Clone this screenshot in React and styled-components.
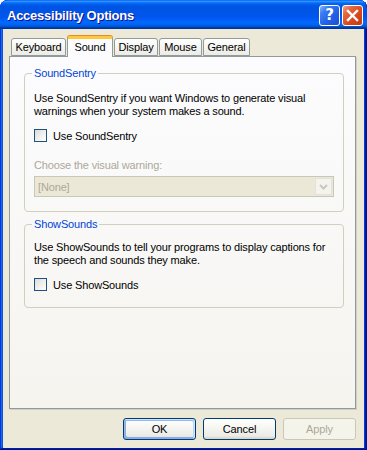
import React from 'react';
import styled, { createGlobalStyle } from 'styled-components';

const Global = createGlobalStyle`
  html, body { margin: 0; padding: 0; background: #ffffff; }
  body { font-family: "Liberation Sans", Arial, sans-serif; font-size: 11px; letter-spacing: -0.15px; color: #000; }
  #root { width: 367px; height: 450px; }
`;

const Window = styled.div`
  width: 367px;
  height: 450px;
  box-sizing: border-box;
  display: flex;
  flex-direction: column;
  background: #0831d9;
  border-radius: 8px 8px 0 0;
  padding-bottom: 3px;
  box-shadow: inset -1px -1px #00138c, inset 1px 1px #0831d9, inset -2px -2px #001ea0,
    inset 2px 2px #166aee, inset -3px -3px #003bda, inset 3px 3px #0855dd;
  overflow: hidden;
`;

const TitleBar = styled.div`
  height: 29px;
  flex: none;
  display: flex;
  align-items: center;
  padding: 0 4px 0 7px;
  border-radius: 8px 8px 0 0;
  background: linear-gradient(
    180deg,
    #0058ee 0%,
    #3593ff 4%,
    #288eff 6%,
    #127dff 8%,
    #036ffc 10%,
    #0262ee 14%,
    #0057e5 20%,
    #0054e3 24%,
    #0055eb 56%,
    #005bf5 66%,
    #026afe 76%,
    #0062ef 86%,
    #0052d6 92%,
    #0040ab 94%,
    #003092 100%
  );
`;

const Title = styled.div`
  flex: 1;
  color: #fff;
  font-family: "Liberation Sans", Arial, sans-serif;
  font-weight: bold;
  font-size: 13px;
  letter-spacing: -0.25px;
  text-shadow: 1px 1px #0f1089;
  padding-top: 1px;
`;

const Controls = styled.div`
  display: flex;
  gap: 2px;
  padding-top: 1px;
`;

const CtlButton = styled.div`
  width: 21px;
  height: 21px;
  box-sizing: border-box;
  border: 1px solid #fff;
  border-radius: 3px;
  display: flex;
  align-items: center;
  justify-content: center;
  color: #fff;
  font-family: "DejaVu Sans", sans-serif;
  font-weight: bold;
  font-size: 15px;
  letter-spacing: 0;
  background: ${p =>
    p.$close
      ? 'linear-gradient(135deg, #f0a58a 0%, #e5683f 25%, #d9481c 60%, #c23a12 100%)'
      : 'linear-gradient(135deg, #8fb4f8 0%, #3d7cf0 25%, #2160e8 60%, #1a4fd0 100%)'};
`;

const Body = styled.div`
  flex: 1;
  margin: 0 3px;
  background: #ece9d8;
  display: flex;
  flex-direction: column;
  padding: 7px 8px 8px 6px;
`;

const TabStrip = styled.div`
  height: 20px;
  display: flex;
  align-items: flex-end;
  gap: 1px;
  padding-left: 2px;
  position: relative;
  z-index: 1;
`;

const Tab = styled.div`
  box-sizing: border-box;
  width: ${p => p.$w}px;
  height: ${p => (p.$active ? 21 : 18)}px;
  margin-bottom: ${p => (p.$active ? -1 : 0)}px;
  border: 1px solid #919b9c;
  border-bottom: ${p => (p.$active ? 'none' : '1px solid #919b9c')};
  border-top: ${p => (p.$active ? '3px solid #ffc83c' : '1px solid #919b9c')};
  border-radius: 3px 3px 0 0;
  display: flex;
  align-items: center;
  justify-content: center;
  padding-bottom: ${p => (p.$active ? 2 : 0)}px;
  background: ${p => (p.$active ? '#fcfcfe' : 'linear-gradient(180deg, #fff 0%, #f7f7f4 40%, #ecebe6 100%)')};
  box-shadow: ${p => (p.$active ? '0 -1px 0 #e68b2c' : 'none')};
  font-size: 11px;
  white-space: nowrap;
`;

const Panel = styled.div`
  box-sizing: border-box;
  height: 353px;
  border: 1px solid #919b9c;
  box-shadow: 1px 1px 0 #d0cec6;
  background: linear-gradient(180deg, #fcfcfe 0%, #f5f4ef 100%);
  padding: 10px 11px 0 14px;
  display: flex;
  flex-direction: column;
  gap: 6px;
`;

const Group = styled.fieldset`
  margin: 0;
  min-width: 0;
  border: 1px solid #d0d0bf;
  border-radius: 4px;
  padding: 0 9px ${p => p.$pb}px 9px;
`;

const Legend = styled.legend`
  color: #0046d5;
  font-size: 11px;
  line-height: 13px;
  padding: 0 2px;
  margin-left: -2px;
`;

const Description = styled.p`
  margin: ${p => p.$mt}px 0 0 0;
  font-size: 11px;
  line-height: 13px;
  white-space: nowrap;
`;

const CheckRow = styled.label`
  display: flex;
  align-items: center;
  gap: 6px;
  margin-top: 11px;
  height: 13px;
  font-size: 11px;
`;

const Box = styled.span`
  width: 13px;
  height: 13px;
  box-sizing: border-box;
  border: 1px solid #1c5180;
  background: linear-gradient(135deg, #dcdcd7 0%, #f2f2ef 60%, #ffffff 100%);
  flex: none;
`;

const MutedLabel = styled.div`
  color: #aca899;
  margin-top: 17px;
  line-height: 13px;
  font-size: 11px;
`;

const Combo = styled.div`
  margin-top: 4px;
  height: 21px;
  box-sizing: border-box;
  border: 1px solid #c9c7ba;
  background: #ebe8d7;
  display: flex;
  align-items: stretch;
`;

const ComboText = styled.div`
  flex: 1;
  color: #aca899;
  padding-left: 3px;
  display: flex;
  align-items: center;
  font-size: 11px;
`;

const ComboButton = styled.div`
  width: 17px;
  margin: 1px;
  box-sizing: border-box;
  border: 1px solid #e2e1da;
  background: #f4f3ee;
  display: flex;
  align-items: center;
  justify-content: center;
`;

const ButtonRow = styled.div`
  margin-top: 9px;
  display: flex;
  justify-content: flex-end;
  gap: 7px;
`;

const Button = styled.div`
  width: ${p => p.$w}px;
  height: 22px;
  box-sizing: border-box;
  border: 1px solid ${p => (p.$disabled ? '#c9c7ba' : '#003c74')};
  border-radius: 3px;
  display: flex;
  align-items: center;
  justify-content: center;
  font-size: 11px;
  color: ${p => (p.$disabled ? '#aca899' : '#000')};
  background: ${p =>
    p.$disabled ? '#f5f4ea' : 'linear-gradient(180deg, #ffffff 0%, #f4f4f0 50%, #ecebe6 85%, #d6d0c5 100%)'};
  box-shadow: ${p =>
    p.$default
      ? 'inset -1px 1px #cee7ff, inset 1px 2px #98b8ea, inset -2px 2px #bcd4f6, inset 1px -1px #89ade4, inset 2px -2px #89ade4'
      : 'none'};
`;

const Chevron = () => (
  <svg width="9" height="6" viewBox="0 0 9 6">
    <path d="M1 1 L4.5 4.5 L8 1" fill="none" stroke="#c9c7ba" strokeWidth="2" />
  </svg>
);

const CloseX = () => (
  <svg width="13" height="13" viewBox="0 0 13 13">
    <path d="M2 2 L11 11 M11 2 L2 11" stroke="#fff" strokeWidth="2.4" strokeLinecap="square" />
  </svg>
);

export default function App() {
  return (
    <>
      <Global />
      <Window>
        <TitleBar>
          <Title>Accessibility Options</Title>
          <Controls>
            <CtlButton>?</CtlButton>
            <CtlButton $close>
              <CloseX />
            </CtlButton>
          </Controls>
        </TitleBar>
        <Body>
          <TabStrip>
            <Tab $w={55}>Keyboard</Tab>
            <Tab $w={46} $active>Sound</Tab>
            <Tab $w={44}>Display</Tab>
            <Tab $w={43}>Mouse</Tab>
            <Tab $w={47}>General</Tab>
          </TabStrip>
          <Panel>
            <Group $pb={14}>
              <Legend>SoundSentry</Legend>
              <Description $mt={12}>
                Use SoundSentry if you want Windows to generate visual
                <br />
                warnings when your system makes a sound.
              </Description>
              <CheckRow>
                <Box />
                Use SoundSentry
              </CheckRow>
              <MutedLabel>Choose the visual warning:</MutedLabel>
              <Combo>
                <ComboText>[None]</ComboText>
                <ComboButton>
                  <Chevron />
                </ComboButton>
              </Combo>
            </Group>
            <Group $pb={16}>
              <Legend>ShowSounds</Legend>
              <Description $mt={10}>
                Use ShowSounds to tell your programs to display captions for
                <br />
                the speech and sounds they make.
              </Description>
              <CheckRow>
                <Box />
                Use ShowSounds
              </CheckRow>
            </Group>
          </Panel>
          <ButtonRow>
            <Button $w={73} $default>OK</Button>
            <Button $w={73}>Cancel</Button>
            <Button $w={73} $disabled>Apply</Button>
          </ButtonRow>
        </Body>
      </Window>
    </>
  );
}
